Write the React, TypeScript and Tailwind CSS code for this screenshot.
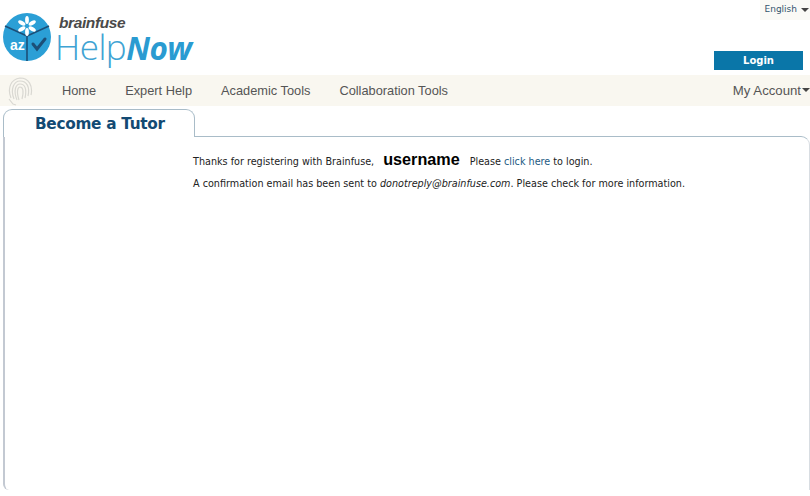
const navItems = ["Home", "Expert Help", "Academic Tools", "Collaboration Tools"];

function LogoMark() {
  return (
    <svg width="48" height="50" viewBox="0 0 48 50" className="shrink-0">
      <circle cx="24" cy="25" r="24" fill="#2b9fd6" />
      <path d="M24 24 L24 49 M24 24 L2 14 M24 24 L46 14" stroke="#1c4f78" strokeWidth="1.6" fill="none" />
      <g fill="#ffffff">
        {[0, 60, 120, 180, 240, 300].map((deg) => (
          <ellipse key={deg} cx="24" cy="8" rx="1.9" ry="4" transform={`rotate(${deg} 24 14)`} />
        ))}
      </g>
      <path d="M30 32 L34 37 L42 27" stroke="#1c4f78" strokeWidth="3" fill="none" strokeLinecap="round" />
      <text x="7" y="38" fontSize="14" fontWeight="700" fill="#ffffff" fontFamily="'Liberation Sans', sans-serif">az</text>
    </svg>
  );
}

function Fingerprint() {
  return (
    <svg width="26" height="30" viewBox="0 0 26 30" fill="none" stroke="#d9d8d2" strokeWidth="1.2">
      <path d="M4 22 C0 12 4 3 13 2 C22 2 26 10 24 19" />
      <path d="M7 23 C3 13 7 5 13 5 C20 5 23 11 21 20" />
      <path d="M10 24 C6 14 9 8 13 8 C18 8 20 13 18 22" />
      <path d="M12 24 C9 15 11 11 13 11 C16 11 17 15 15 23" />
      <path d="M2 23 L6 28 L9 29" />
    </svg>
  );
}

export default function App() {
  return (
    <div className="w-[810px] h-[496px] bg-white overflow-hidden font-['Liberation_Sans',sans-serif]">
      {/* Header */}
      <div className="h-[75px] flex justify-between">
        <div className="flex items-start pl-[3px] pt-[12px]">
          <LogoMark />
          <div className="ml-[4px]">
            <div className="text-[15.5px] leading-[16px] italic font-bold text-[#4a4a4a] ml-[4px] tracking-[-0.4px] mt-[3px]">
              brainfuse
            </div>
            <div className="text-[35px] leading-[32px] text-[#3ea3d3] tracking-[-0.5px] font-['Open_Sans',sans-serif] font-light">
              Help<span className="text-[31.5px] font-bold italic text-[#2a9bd1]">Now</span>
            </div>
          </div>
        </div>
        <div className="flex flex-col items-end">
          <div className="h-[20px] w-[50px] bg-[#fafaf6] flex items-center justify-end pr-[1px] text-[9px] text-[#33556e] font-['DejaVu_Sans',sans-serif]">
            English
            <span className="ml-[4px] w-0 h-0 border-x-[4px] border-x-transparent border-t-[4px] border-t-[#444444]" />
          </div>
          <button className="mt-[31px] mr-[7px] w-[89px] h-[19px] bg-[#0a76a8] text-white text-[10px] font-bold font-['DejaVu_Sans',sans-serif]">
            Login
          </button>
        </div>
      </div>

      {/* Nav */}
      <div className="h-[31px] bg-[#f9f7f0] flex items-center text-[#555555] text-[12.8px]">
        <div className="w-[62px] pl-[7px] flex items-center">
          <Fingerprint />
        </div>
        <div className="flex gap-[29px]">
          {navItems.map((item) => (
            <span key={item}>{item}</span>
          ))}
        </div>
        <div className="ml-auto flex items-center text-[13.2px]">
          My Account
          <span className="ml-[1px] w-0 h-0 border-x-[4px] border-x-transparent border-t-[4px] border-t-[#444444]" />
        </div>
      </div>

      {/* Tab */}
      <div className="pt-[3px] pl-[3px]">
        <div className="relative z-10 w-[192px] h-[28px] -mb-px border border-b-0 border-[#a9bcc8] rounded-t-[9px] bg-white pl-[31px] pt-[5px] text-[15.3px] leading-[18px] font-bold text-[#134a73] font-['DejaVu_Sans',sans-serif] tracking-[-0.3px]">
          Become a Tutor
        </div>
        <div className="h-[354px] border-l-2 border-t border-r border-l-[#c3c9d2] border-t-[#a9bcc8] border-r-[#d8dde2] rounded-tr-[9px] rounded-bl-[6px] pl-[188px] pt-[15px] font-['DejaVu_Sans',sans-serif] text-[9.63px] text-[#222222]">
          <div className="h-[21px] flex items-center">
            <span>Thanks for registering with Brainfuse,</span>
            <span className="ml-[9px] mr-[10px] mb-[8px] text-[16.2px] leading-[20px] font-bold text-black font-['Liberation_Sans',sans-serif]">
              username
            </span>
            <span>
              Please <a className="text-[#1d5a82]">click here</a> to login.
            </span>
          </div>
          <div className="mt-[4px]">
            A confirmation email has been sent to <em>donotreply@brainfuse.com</em>. Please check for more information.
          </div>
        </div>
      </div>
    </div>
  );
}
